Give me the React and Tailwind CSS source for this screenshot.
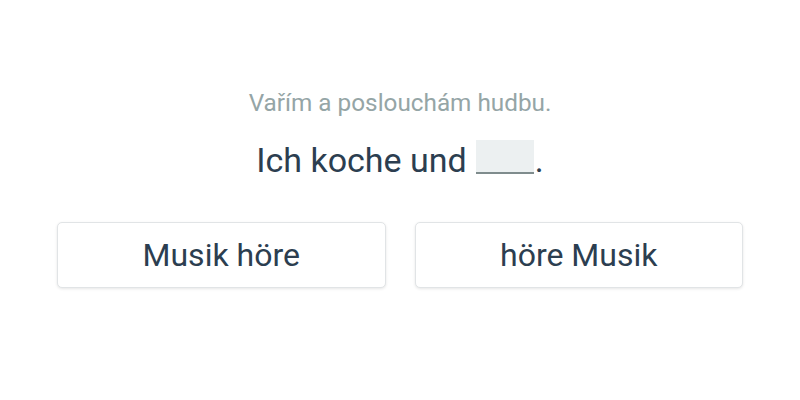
export default function App() {
    return (
        <div className="w-[800px] h-[400px] bg-white flex flex-col items-center font-['Roboto',sans-serif]">

            {/* Prompt */}
            <p className="mt-[89px] text-[24.3px] leading-[28px] text-[#95a5a6]">
                Vařím a poslouchám hudbu.
            </p>

            {/* Sentence with blank */}
            <p className="mt-[23px] text-[34px] leading-[40px] text-[#2c3e50] flex items-start">
                Ich koche und
                <span className="ml-[9px] mr-[1px] inline-block w-[58px] h-[34px] bg-[#ecf0f1] border-b-2 border-[#7f8c8d]" />
                .
            </p>

            {/* Answer options */}
            <div className="mt-[42px] w-[686px] grid grid-cols-2 gap-[29px]">
                <button className="h-[66px] rounded-[5px] bg-white border border-[#e1e4e6] shadow-[0_1px_3px_rgba(0,0,0,0.1)] text-[32px] text-[#2c3e50]">
                    Musik höre
                </button>
                <button className="h-[66px] rounded-[5px] bg-white border border-[#e1e4e6] shadow-[0_1px_3px_rgba(0,0,0,0.1)] text-[32px] text-[#2c3e50]">
                    höre Musik
                </button>
            </div>

        </div>
    )
}
